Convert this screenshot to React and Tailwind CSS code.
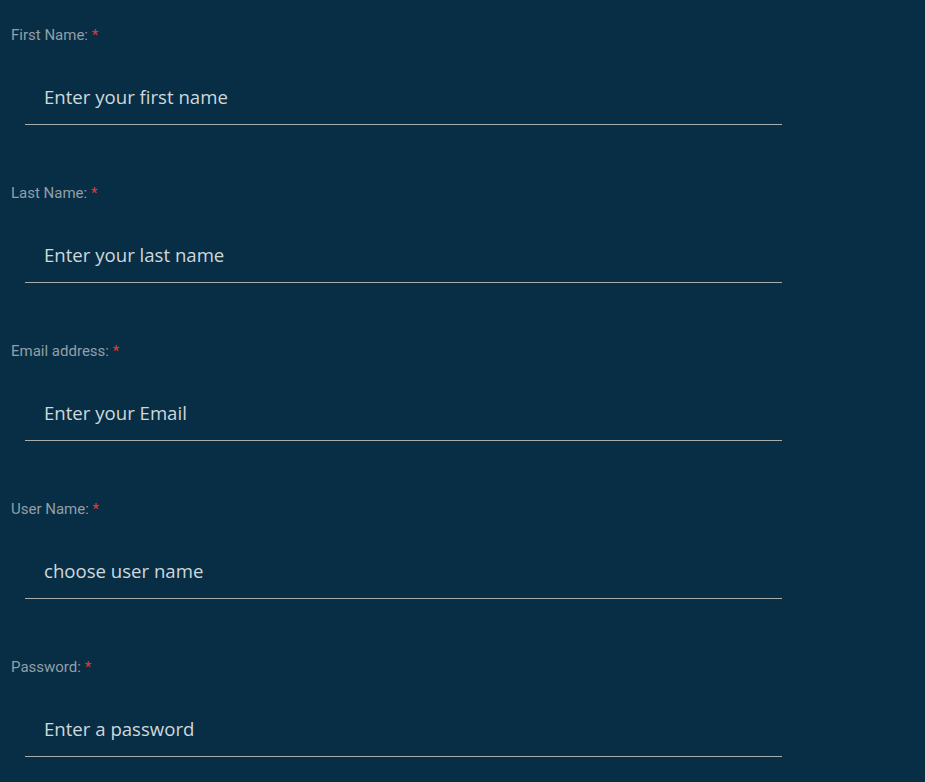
import React from "react";

const fields = [
  { label: "First Name:", ph: "Enter your first name", type: "text" },
  { label: "Last Name:", ph: "Enter your last name", type: "text" },
  { label: "Email address:", ph: "Enter your Email", type: "email" },
  { label: "User Name:", ph: "choose user name", type: "text" },
  { label: "Password:", ph: "Enter a password", type: "password" },
];

export default function App() {
  return (
    <div className="min-h-[782px] w-full bg-[#072e44] pt-[25px] pl-[11px]">
      {fields.map((f) => (
        <div key={f.label} className="mb-[58px] flex flex-col">
          <label className="h-[20px] text-[15px] leading-[20px] text-[#929fa8] [font-family:Roboto,sans-serif]">
            {f.label} <span className="text-[#e53935]">*</span>
          </label>
          <input
            type={f.type}
            placeholder={f.ph}
            className="mt-[28px] ml-[14px] h-[52px] w-[757px] border-b border-[#a7adab] bg-transparent pb-[5px] pl-[19px] text-[18.6px] text-[#cfd8dc] outline-none placeholder:text-[#cfd8dc] [font-family:'Open_Sans',sans-serif]"
          />
        </div>
      ))}
    </div>
  );
}
